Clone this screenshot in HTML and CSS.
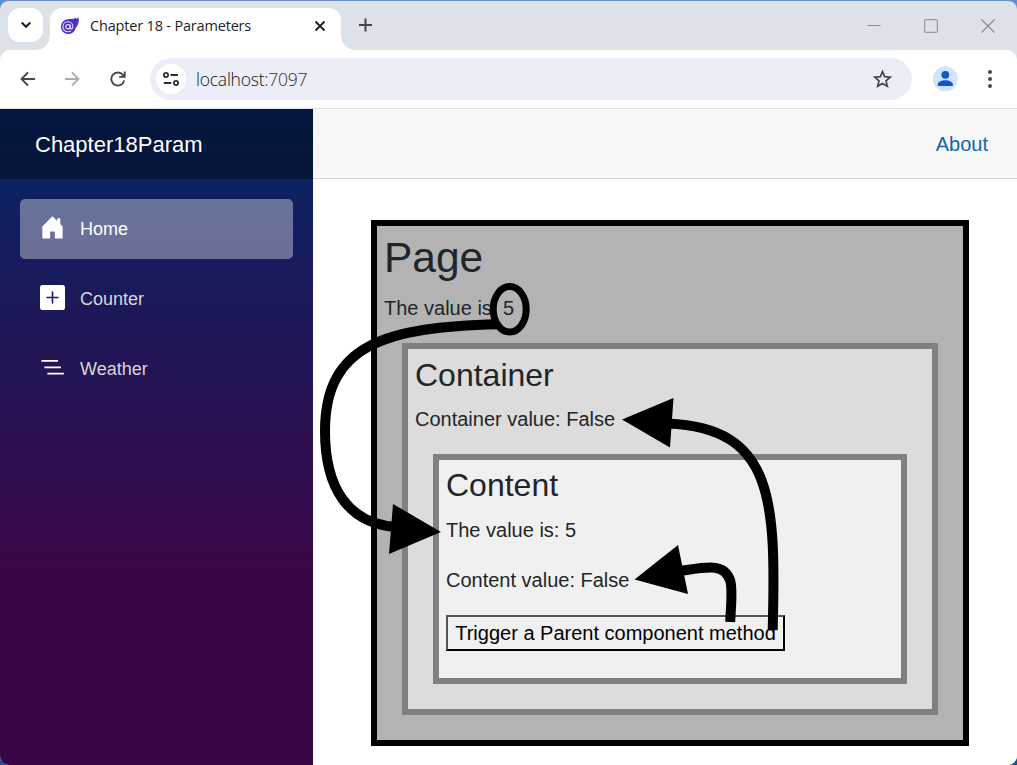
FILE: index.html
```html
<!DOCTYPE html>
<html lang="en">
<head>
<meta charset="utf-8">
<title>Chapter 18 - Parameters</title>
<link rel="stylesheet" href="styles.css">
</head>
<body>
<div class="window">
  <header class="tabstrip">
    <button class="tab-search" aria-label="Search tabs"><svg width="12" height="8" viewBox="0 0 12 8"><path d="M1.700 1.500 6 5.700l4.300-4.200" fill="none" stroke="#1f1f1f" stroke-width="2.100"/></svg></button>
    <div class="tab">
      <svg class="favicon" width="20" height="18" viewBox="0 0 20 18">
        <path d="M18.300.1C17.800 1.300 17 2 16 2.100L16.200.500C14.500 1.700 13 2.100 10.500 2.100 4.300 2 1 5.500 1 10c0 4 3.200 7 7.200 7 4 0 6.500-2.500 7.400-6C18 8.500 19.800 4 18.300.1Z" fill="#512bd4"/>
        <circle cx="8" cy="9.700" r="2.200" fill="none" stroke="#e8e0ff" stroke-width="1.200"/>
        <path d="M10.200 7.500v3.100c0 1.900 2.700 1.700 2.700-.900 0-2.900-2.200-4.900-4.900-4.900-2.900 0-5.100 2.200-5.100 5s2.100 5 5 5c1.300 0 2.300-.3 3.200-.9" fill="none" stroke="#e8e0ff" stroke-width="1.100"/>
      </svg>
      <span class="tab-title">Chapter 18 - Parameters</span>
      <svg class="tab-close" width="12" height="12" viewBox="0 0 12 12"><path d="m1.500 1.500 9 9m0-9-9 9" stroke="#1f1f1f" stroke-width="1.900"/></svg>
    </div>
    <svg class="new-tab" width="14" height="14" viewBox="0 0 14 14"><path d="M6.500.5v13M0 7h13" stroke="#444746" stroke-width="2"/></svg>
    <div class="controls">
      <svg width="14" height="14" viewBox="0 0 14 14"><path d="M.5 6.500h13" stroke="#8b8e93"/></svg>
      <svg width="14" height="14" viewBox="0 0 14 14"><rect x=".6" y=".6" width="12.800" height="12.800" rx="1.500" fill="none" stroke="#95989d" stroke-width="1.200"/></svg>
      <svg width="14" height="14" viewBox="0 0 14 14"><path d="m.5.5 13 13m0-13-13 13" stroke="#85888d" stroke-width="1.100"/></svg>
    </div>
  </header>

  <div class="toolbar">
    <svg class="back" width="16" height="16" viewBox="0 0 16 16"><path d="M15 8H2M8 1.500 1.500 8 8 14.500" fill="none" stroke="#474747" stroke-width="1.900"/></svg>
    <svg class="forward" width="16" height="16" viewBox="0 0 16 16"><path d="M1 8h13M8 1.500 14.500 8 8 14.500" fill="none" stroke="#adadad" stroke-width="1.900"/></svg>
    <svg class="reload" width="16" height="16" viewBox="0 0 16 16"><path d="M14.200 9.400A6.500 6.500 0 1 1 13 4.100L14.500 5.700M14.700.5v5.400H9.200" fill="none" stroke="#474747" stroke-width="1.900"/></svg>
    <div class="address">
      <span class="site-info"><svg width="16" height="14" viewBox="0 0 16 14"><g fill="none" stroke="#303134" stroke-width="1.800"><circle cx="3" cy="3" r="2.100"/><path d="M7.500 3H15M.8 11h7.500"/><circle cx="13" cy="11" r="2.100"/></g></svg></span>
      <span class="url">localhost<span class="port">:7097</span></span>
      <svg class="star" width="20" height="20" viewBox="0 0 20 20"><path d="m10.500 2.700 2.100 5 5.600.5-4.200 3.600 1.300 5.500-4.800-2.900-4.800 2.900 1.300-5.500L2.800 8.200l5.600-.5Z" fill="none" stroke="#474747" stroke-width="1.700"/></svg>
    </div>
    <svg class="profile" width="26" height="26" viewBox="0 0 26 26"><circle cx="13.300" cy="12.800" r="12.500" fill="#d3e3fd"/><circle cx="13.300" cy="8.800" r="3.900" fill="#0b57d0"/><path d="M5.800 20v-1.800c0-2.500 4.500-4 7.500-4s7.500 1.500 7.500 4V20Z" fill="#0b57d0"/></svg>
    <svg class="menu" width="6" height="20" viewBox="0 0 6 20"><g fill="#474747"><circle cx="3" cy="3" r="2"/><circle cx="3" cy="10" r="2"/><circle cx="3" cy="17" r="2"/></g></svg>
  </div>

  <div class="app">
    <aside class="sidebar">
      <div class="brand">Chapter18Param</div>
      <nav class="nav">
        <a class="nav-link active"><svg width="25" height="25" viewBox="0 0 16 16" fill="#fff"><path d="M6.500 14.500v-3.505c0-.245.25-.495.5-.495h2c.25 0 .5.25.5.5v3.500a.5.5 0 0 0 .5.5h4a.5.5 0 0 0 .5-.5v-7a.5.5 0 0 0-.146-.354L13 5.793V2.500a.5.5 0 0 0-.5-.5h-1a.5.5 0 0 0-.5.5v1.293L8.354 1.146a.5.5 0 0 0-.708 0l-6 6A.5.5 0 0 0 1.500 7.500v7a.5.5 0 0 0 .5.5h4a.5.5 0 0 0 .5-.5Z"/></svg>Home</a>
        <a class="nav-link"><svg width="25" height="25" viewBox="0 0 16 16" fill="#fff"><path fill-rule="evenodd" d="M1 0h14a1 1 0 0 1 1 1v14a1 1 0 0 1-1 1H1a1 1 0 0 1-1-1V1a1 1 0 0 1 1-1Zm7.500 4.500a.5.5 0 0 0-1 0v3h-3a.5.5 0 0 0 0 1h3v3a.5.5 0 0 0 1 0v-3h3a.5.5 0 0 0 0-1h-3v-3Z"/></svg>Counter</a>
        <a class="nav-link"><svg width="25" height="25" viewBox="0 0 16 16" fill="#fff"><path d="M.9 3.200h10.600v1.100H.9zM2.800 7.300h10.600v1.100H2.800zM4.700 11.400h10.600v1.100H4.700z"/></svg>Weather</a>
      </nav>
    </aside>
    <main class="main">
      <div class="top-row"><a class="about">About</a></div>
      <article class="article">
        <section class="box page">
          <h1>Page</h1>
          <p>The value is: 5</p>
          <section class="box container">
            <h3>Container</h3>
            <p>Container value: False</p>
            <section class="box content">
              <h3>Content</h3>
              <p>The value is: 5</p>
              <p>Content value: False</p>
              <p class="action"><button class="trigger">Trigger a Parent component method</button></p>
            </section>
          </section>
        </section>
      </article>
    </main>
  </div>

  <svg class="arrows" width="1017" height="765" viewBox="0 0 1017 765">
    <g fill="none" stroke="#000" stroke-width="10">
      <ellipse cx="509.700" cy="309.300" rx="16.500" ry="22.700" stroke-width="7"/>
      <path d="M498 324.200C388 327 325 343 325 431C325 488 348 524 397 527"/>
      <path d="M772.700 630C776 500 774 428 668 423.500"/>
      <path d="M730.200 622C731 604 733 588 730 580C724 563 708 567 680 571"/>
    </g>
    <path d="M441 532 393 504 389 554ZM622 419.500 673.500 398 670 447.500ZM634.500 579.500 678 545 688 594Z"/>
  </svg>
</div>
</body>
</html>
```
FILE: styles.css
```css
* { box-sizing: border-box; }
body {
  margin: 0;
  background: linear-gradient(#5f92cd 50%, #244f82 50%);
  font-family: "Liberation Sans", Arial, sans-serif;
}
svg { display: block; flex: none; }
.window {
  position: relative;
  width: 1017px;
  height: 765px;
  border-top: 1px solid #6591c8;
  border-radius: 9px;
  overflow: hidden;
  display: flex;
  flex-direction: column;
  background: #dde2e9;
}
.tabstrip { height: 49px; display: flex; flex: none; padding: 7px 22px 0 8px; }
.tab-search {
  width: 35px;
  height: 34px;
  border: 0;
  padding: 0;
  border-radius: 12px;
  background: #fff;
  display: grid;
  place-items: center;
}
.tab {
  position: relative;
  width: 291px;
  margin-left: 7px;
  padding: 0 15px 7px 10px;
  border-radius: 12px 12px 0 0;
  background: #fff;
  display: flex;
  align-items: center;
}
.tab::before, .tab::after {
  content: "";
  position: absolute;
  bottom: 0;
  width: 14px;
  height: 14px;
}
.tab::before { left: -14px; background: radial-gradient(circle at 0 0, transparent 13.500px, #fff 14px); }
.tab::after { right: -14px; background: radial-gradient(circle at 100% 0, transparent 13.500px, #fff 14px); }
.tab-title {
  margin-left: 10px;
  font: 14.500px/20px "Open Sans", sans-serif;
  letter-spacing: -.18px;
  color: #1f1f1f;
  white-space: nowrap;
}
.tab-close { margin-left: auto; }
.new-tab { margin: 10px 0 0 18px; }
.controls { margin: 11px 0 0 auto; display: flex; gap: 43px; }
.toolbar {
  height: 59px;
  flex: none;
  display: flex;
  align-items: center;
  padding: 0 24px 0 20px;
  background: #fff;
  border-bottom: 1px solid #dfe0e3;
  border-radius: 10px 10px 0 0;
}
.forward { margin-left: 28px; }
.reload { margin-left: 30px; }
.address {
  width: 762px;
  height: 42px;
  margin-left: 24px;
  padding: 0 20px 0 6px;
  border-radius: 21px;
  background: #ebeef7;
  display: flex;
  align-items: center;
}
.site-info {
  width: 30px;
  height: 30px;
  border-radius: 50%;
  background: #fff;
  display: grid;
  place-items: center;
}
.url {
  margin-left: 10px;
  font: 300 17.500px/24px "Open Sans", sans-serif;
  letter-spacing: -.23px;
  color: #111;
}
.port { color: #333; }
.star { margin-left: auto; }
.profile { margin-left: 20px; }
.menu { margin-left: 29px; }
.app { flex: 1; display: flex; min-height: 0; }
.sidebar {
  width: 313px;
  flex: none;
  background: linear-gradient(180deg, #052767 0%, #3a0647 70%);
}
.brand {
  height: 70px;
  padding-left: 35px;
  line-height: 71px;
  font-size: 22px;
  color: #fff;
  background: rgba(0, 0, 0, .4);
}
.nav { padding: 20px; display: flex; flex-direction: column; gap: 10px; }
.nav-link {
  height: 60px;
  padding-left: 20px;
  border-radius: 5px;
  display: flex;
  align-items: center;
  gap: 15px;
  font-size: 18px;
  color: #d7d7d7;
}
.nav-link svg { margin-top: -3px; }
.nav-link:not(.active) svg { border-radius: 2px; }
.nav-link.active { background: rgba(255, 255, 255, .37); color: #fff; }
.main { flex: 1; background: #fff; }
.top-row {
  height: 70px;
  padding: 1px 29px 0 0;
  display: flex;
  align-items: center;
  justify-content: flex-end;
  background: #f7f7f7;
  border-bottom: 1px solid #d6d5d5;
}
.about { font-size: 20px; line-height: 24px; color: #0f66ae; }
.article { padding: 41px 48px 0 58px; color: #212529; font-size: 20px; line-height: 30px; }
.box { border: 6px solid #808080; padding: 6px 6.250px 6px 7px; }
.page { background: #b3b3b3; border-color: #000; padding-bottom: 25px; }
.page > h1 { margin-bottom: 9.500px; }
.container { background: #dcdcdc; margin: 0 18.750px 0 18px; padding-top: 7px; padding-bottom: 25px; }
.content { background: #f0f0f0; margin: 0 18.750px 0 18px; padding-bottom: 7px; }
h1, h3 { margin: 0 0 10px; font-weight: 400; line-height: 1.2; }
h1 { font-size: 42.500px; }
h3 { font-size: 32px; line-height: 38.500px; }
.content > h3 { margin-bottom: 10.500px; }
p { margin: 0 0 20px; }
.action { display: flex; }
.trigger {
  width: 339px;
  height: 36px;
  padding: 0 7px;
  border: 2px solid;
  border-color: #555 #000 #000 #555;
  background: #f0f0f0;
  color: #000;
  font: 20px/30px "Liberation Sans", Arial, sans-serif;
  white-space: nowrap;
}
.arrows { position: absolute; left: 0; top: -1px; }
```
